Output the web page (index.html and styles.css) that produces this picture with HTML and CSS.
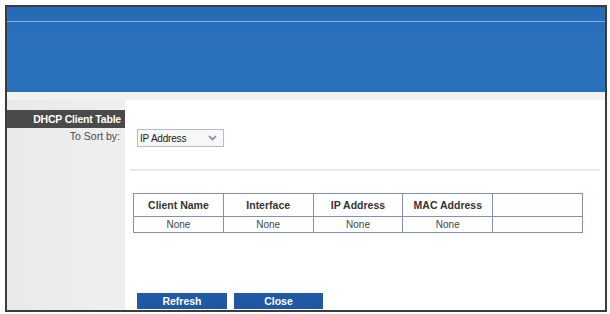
FILE: index.html
```html
<!DOCTYPE html>
<html>
<head>
<meta charset="utf-8">
<link rel="stylesheet" href="styles.css">
</head>
<body>
<div class="frame">
  <div class="header"><div class="hline"></div></div>
  <div class="strip"></div>
  <div class="main">
    <div class="side">
      <div class="title">DHCP Client Table</div>
      <div class="sortlabel">To Sort by:</div>
    </div>
    <div class="content">
      <div class="select">
        <span class="seltext">IP Address</span>
        <svg class="chev" width="9" height="6" viewBox="0 0 9 6"><polyline points="1,1 4.5,4.5 8,1" fill="none" stroke="#6f86b4" stroke-width="1.6"/></svg>
      </div>
      <div class="sep"></div>
      <table class="clients">
        <tr class="head"><th>Client Name</th><th>Interface</th><th>IP Address</th><th>MAC Address</th><th></th></tr>
        <tr class="row"><td>None</td><td>None</td><td>None</td><td>None</td><td></td></tr>
      </table>
      <div class="buttons">
        <div class="btn btn-refresh">Refresh</div>
        <div class="btn btn-close">Close</div>
      </div>
    </div>
  </div>
</div>
</body>
</html>
```
FILE: styles.css
```css
html, body {
  margin: 0;
  padding: 0;
  background: #ffffff;
  font-family: "Liberation Sans", Arial, sans-serif;
}
.frame {
  margin: 5px 0 0 5px;
  width: 598px;
  height: 303px;
  border: 2px solid #3c3c3c;
  display: flex;
  flex-direction: column;
  overflow: hidden;
  background: #ffffff;
}
.header {
  height: 85px;
  flex: none;
  background: linear-gradient(#2669b8, #2b72bd 40%, #2a71bc);
  display: flex;
  flex-direction: column;
}
.hline {
  margin-top: 14px;
  height: 1px;
  background: #86acd8;
}
.strip {
  height: 8px;
  flex: none;
  background: #f1f1f1;
}
.main {
  flex: 1;
  display: flex;
}
.side {
  width: 118px;
  flex: none;
  background: linear-gradient(90deg, #e9e9e9, #efefef);
  padding-top: 10px;
}
.title {
  height: 18px;
  line-height: 18px;
  background: #4a4a4a;
  color: #ffffff;
  font-size: 10.5px;
  font-weight: bold;
  text-align: right;
  padding-right: 4px;
  letter-spacing: -0.2px;
}
.sortlabel {
  margin-top: 2px;
  font-size: 10.5px;
  color: #4a4a4a;
  text-align: right;
  padding-right: 5px;
}
.content {
  flex: 1;
  padding-left: 12px;
  display: flex;
  flex-direction: column;
  align-items: flex-start;
}
.select {
  margin-top: 29px;
  height: 16px;
  border: 1px solid #b4bccb;
  background: #f7f7f7;
  display: flex;
  align-items: center;
  justify-content: space-between;
  padding: 0 6px 0 2px;
  box-sizing: content-box;
  width: 77px;
}
.seltext {
  font-size: 10px;
  color: #222;
  letter-spacing: -0.2px;
}
.chev {
  display: block;
}
.sep {
  margin-top: 22px;
  margin-left: -7px;
  width: 470px;
  height: 2px;
  background: #e9e9e9;
}
.clients {
  margin-top: 22px;
  margin-left: -4px;
  width: 450px;
  border-collapse: collapse;
  border: 1px solid #8290b8;
  table-layout: fixed;
}
.clients th, .clients td {
  border-left: 1px solid #8290b8;
  text-align: center;
  padding: 0;
}
.clients th {
  height: 22px;
  font-size: 10.5px;
  font-weight: bold;
  color: #333;
  border-bottom: 1px solid #8290b8;
}
.clients td {
  height: 15px;
  font-size: 10px;
  color: #444;
}
.buttons {
  margin-top: 60px;
  display: flex;
  gap: 7px;
}
.btn {
  height: 16px;
  line-height: 16px;
  background: #1f58a4;
  color: #ffffff;
  font-size: 10.5px;
  font-weight: bold;
  text-align: center;
}
.btn-refresh { width: 90px; }
.btn-close { width: 89px; }
```
